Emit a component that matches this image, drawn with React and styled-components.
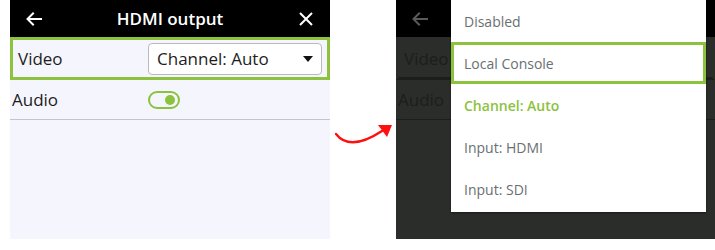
import React from "react";
import styled, { createGlobalStyle } from "styled-components";

const GREEN = "#8cc23e";

const GlobalStyle = createGlobalStyle`
  html, body {
    margin: 0;
    padding: 0;
    background: #fff;
  }
  body {
    font-family: "Open Sans", "Noto Sans", sans-serif;
  }
`;

const Page = styled.div`
  display: flex;
  align-items: flex-start;
  width: 715px;
  height: 250px;
  padding-left: 10px;
  box-sizing: border-box;
`;

const Screen = styled.div`
  position: relative;
  width: ${(p) => p.$width}px;
  height: 239px;
  background: ${(p) => (p.$dimmed ? "#2b2d2a" : "#f5f6fd")};
  overflow: hidden;
  display: flex;
  flex-direction: column;
`;

const Header = styled.div`
  height: 37px;
  background: #000;
  display: flex;
  align-items: center;
  justify-content: space-between;
  padding: 0 14px;
  color: ${(p) => (p.$dimmed ? "#5a5a5a" : "#fff")};
`;

const Title = styled.div`
  font-size: 17px;
  font-weight: 600;
  color: #fff;
`;

const IconButton = styled.div`
  width: 20px;
  height: 20px;
  display: flex;
  align-items: center;
  justify-content: center;
`;

const Row = styled.div`
  height: ${(p) => (p.$focused ? "37px" : "39px")};
  display: flex;
  align-items: center;
  padding-left: ${(p) => (p.$focused ? "5px" : "2px")};
  padding-right: 5px;
  border: ${(p) => (p.$focused ? `3px solid ${p.$dimmed ? "#2b2d2a" : GREEN}` : "none")};
  border-bottom: ${(p) =>
    p.$focused
      ? `3px solid ${p.$dimmed ? "#1d1e1c" : GREEN}`
      : `1px solid ${p.$dimmed ? "#1d1e1c" : "#c4c5cc"}`};
`;

const Label = styled.div`
  width: ${(p) => (p.$focused ? "130px" : "136px")};
  font-size: 17px;
  color: #1d1d1d;
`;

const Select = styled.div`
  flex: 1;
  height: 30px;
  background: #fff;
  border: 1px solid #b9babf;
  border-radius: 4px;
  display: flex;
  align-items: center;
  justify-content: space-between;
  padding: 0 8px 0 8px;
  font-size: 17px;
  color: #1d1d1d;
`;

const Caret = styled.div`
  width: 0;
  height: 0;
  border-left: 5px solid transparent;
  border-right: 5px solid transparent;
  border-top: 6px solid #111;
`;

const Toggle = styled.div`
  box-sizing: border-box;
  width: 32px;
  height: 18px;
  border: 2px solid ${GREEN};
  border-radius: 9px;
  display: flex;
  align-items: center;
  justify-content: flex-end;
  padding: 0 3px;
`;

const Knob = styled.div`
  width: 10px;
  height: 10px;
  border-radius: 50%;
  background: ${GREEN};
`;

const ArrowColumn = styled.div`
  width: 66px;
  height: 239px;
  display: flex;
  align-items: flex-start;
`;

const Menu = styled.div`
  position: absolute;
  top: 0;
  left: 55px;
  width: 255px;
  height: 212px;
  background: #fff;
  box-shadow: 0 1px 2px rgba(0, 0, 0, 0.45);
  display: flex;
  flex-direction: column;
`;

const MenuItem = styled.div`
  height: 42px;
  box-sizing: border-box;
  display: flex;
  align-items: center;
  padding-left: ${(p) => (p.$focused ? "10px" : "13px")};
  font-size: 14px;
  border: ${(p) => (p.$focused ? `3px solid ${GREEN}` : "none")};
  color: ${(p) => (p.$selected ? GREEN : "#6a6f73")};
  font-weight: ${(p) => (p.$selected ? 600 : 400)};
`;

const BackIcon = () => (
  <svg width="18" height="16" viewBox="0 0 18 16" fill="none" stroke="currentColor" strokeWidth="2" strokeLinecap="square">
    <path d="M16 8H3M8 2.5L2.5 8 8 13.5" />
  </svg>
);

const CloseIcon = () => (
  <svg width="16" height="16" viewBox="0 0 16 16" fill="none" stroke="currentColor" strokeWidth="2">
    <path d="M2 2L14 14M14 2L2 14" />
  </svg>
);

const CurvedArrow = () => (
  <svg width="66" height="239" viewBox="0 0 66 239">
    <path d="M6 134 Q20 152 52 131" fill="none" stroke="#ff1010" strokeWidth="2.4" strokeLinecap="round" />
    <polygon points="62,125 48,125 57,137" fill="#ff1010" />
  </svg>
);

const options = ["Disabled", "Local Console", "Channel: Auto", "Input: HDMI", "Input: SDI"];

function HdmiScreen({ dimmed }) {
  return (
    <>
      <Header $dimmed={dimmed}>
        <IconButton>
          <BackIcon />
        </IconButton>
        {!dimmed && <Title>HDMI output</Title>}
        {!dimmed && (
          <IconButton>
            <CloseIcon />
          </IconButton>
        )}
      </Header>
      <Row $focused $dimmed={dimmed}>
        <Label $focused>Video</Label>
        {!dimmed && (
          <Select>
            Channel: Auto
            <Caret />
          </Select>
        )}
      </Row>
      <Row $dimmed={dimmed}>
        <Label>Audio</Label>
        {!dimmed && (
          <Toggle>
            <Knob />
          </Toggle>
        )}
      </Row>
    </>
  );
}

export default function App() {
  return (
    <>
      <GlobalStyle />
      <Page>
        <Screen $width={320}>
          <HdmiScreen />
        </Screen>
        <ArrowColumn>
          <CurvedArrow />
        </ArrowColumn>
        <Screen $width={319} $dimmed>
          <HdmiScreen dimmed />
          <Menu>
            {options.map((o) => (
              <MenuItem key={o} $focused={o === "Local Console"} $selected={o === "Channel: Auto"}>
                {o}
              </MenuItem>
            ))}
          </Menu>
        </Screen>
      </Page>
    </>
  );
}
